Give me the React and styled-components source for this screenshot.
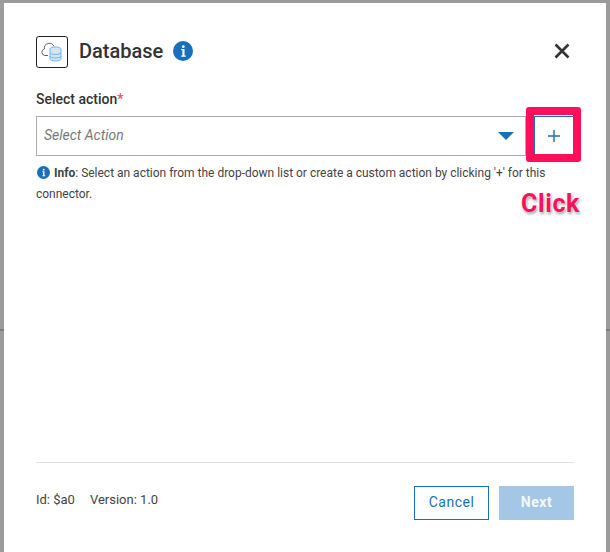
import React from "react";
import styled, { createGlobalStyle } from "styled-components";

const Global = createGlobalStyle`
  html, body {
    margin: 0;
    height: 552px;
    overflow: hidden;
    background: linear-gradient(to bottom, #9b9b9b 329px, #7f7f7f 329px, #7f7f7f 331px, #9b9b9b 331px);
    font-family: Roboto, "Liberation Sans", sans-serif;
  }
`;

const Modal = styled.div`
  box-sizing: border-box;
  position: relative;
  margin: 3px 4px 0;
  height: 549px;
  background: #fff;
  padding: 33px 32px 32px;
  display: flex;
  flex-direction: column;
  color: #333;
`;

const Header = styled.div`
  display: flex;
  align-items: center;
  height: 32px;
`;

const Logo = styled.div`
  box-sizing: border-box;
  width: 32px;
  height: 32px;
  border: 1px solid #222;
  border-radius: 3px;
  display: flex;
  align-items: center;
  justify-content: center;
`;

const Title = styled.h1`
  margin: 0 0 2px 11px;
  font-size: 20px;
  line-height: 24px;
  font-weight: 500;
  color: #333;
`;

const HelpBadge = styled.svg`
  width: 20px;
  height: 20px;
  margin: 0 0 2px 10px;
`;

const CloseButton = styled.button`
  margin: 0 0 2px auto;
  width: 24px;
  height: 24px;
  padding: 0;
  border: 0;
  background: none;
  display: flex;
  align-items: center;
  justify-content: center;
`;

const Label = styled.label`
  display: block;
  margin-top: 22px;
  font-size: 14px;
  line-height: 18px;
  font-weight: 500;
  color: #333;
`;

const Required = styled.span`
  color: #f0506e;
`;

const ActionRow = styled.div`
  display: flex;
  margin-top: 8px;
  gap: 8px;
`;

const SelectBox = styled.div`
  box-sizing: border-box;
  flex: 1;
  height: 40px;
  border: 1px solid #adadad;
  display: flex;
  align-items: center;
  padding: 0 11px 2px 7px;
  font-size: 14px;
  font-style: italic;
  color: #777;
`;

const Caret = styled.span`
  margin: 2px 0 0 auto;
  width: 0;
  height: 0;
  border-left: 8px solid transparent;
  border-right: 8px solid transparent;
  border-top: 8px solid #1a6fbb;
`;

const AddButton = styled.button`
  box-sizing: border-box;
  width: 40px;
  height: 40px;
  padding: 0;
  border: 1px solid #1a6fbb;
  background: #fff;
  display: flex;
  align-items: center;
  justify-content: center;
`;

const Highlight = styled.div`
  position: absolute;
  left: 522px;
  top: 104px;
  width: 55px;
  height: 55px;
  box-sizing: border-box;
  border: 8px solid #ff0f5b;
  border-radius: 3px;
  pointer-events: none;
`;

const Callout = styled.div`
  position: absolute;
  left: 517px;
  top: 186px;
  font-size: 25px;
  line-height: 29px;
  letter-spacing: 0.6px;
  font-weight: 700;
  color: #ff0f5b;
  text-shadow: 0 0 2px #fff, 1px 2px 3px rgba(0, 0, 0, 0.4);
`;

const InfoText = styled.p`
  margin: 7px 0 0;
  font-size: 12px;
  line-height: 21px;
  letter-spacing: -0.01px;
  color: #444;
`;

const InfoDot = styled.svg`
  width: 13px;
  height: 13px;
  margin: 0 4px 0 1px;
  vertical-align: -1.5px;
`;

const Footer = styled.div`
  margin-top: auto;
  border-top: 1px solid #e2e2e2;
  padding-top: 23px;
  display: flex;
  align-items: flex-start;
`;

const Meta = styled.span`
  font-size: 13px;
  line-height: 16px;
  margin-top: 6px;
  color: #444;
  margin-right: ${(p) => p.$gap || 0}px;
`;

const FooterButton = styled.button`
  box-sizing: border-box;
  width: 75px;
  height: 34px;
  padding: 0 0 2px;
  font-family: inherit;
  font-size: 14px;
  letter-spacing: 0.5px;
  font-weight: ${(p) => (p.$primary ? 700 : 400)};
  color: ${(p) => (p.$primary ? "#f4f8fc" : "#1a6fbb")};
  background: ${(p) => (p.$primary ? "#a3c7e4" : "#fff")};
  border: ${(p) => (p.$primary ? "0" : "1px solid #1a6fbb")};
  margin-left: ${(p) => (p.$primary ? "10px" : "auto")};
`;

const CloudDbIcon = () => (
  <svg width="26" height="26" viewBox="0 0 26 26" fill="none">
    <path
      d="M9 16.500H6a3.300 3.300 0 0 1-.6-6.500A5 5 0 0 1 15 7.500"
      stroke="#666"
      strokeWidth="1"
    />
    <ellipse cx="16.500" cy="10" rx="5.500" ry="2" fill="#cfe6fb" stroke="#6db3ee" />
    <path
      d="M11 10v10c0 1.100 2.500 2 5.500 2s5.500-.9 5.500-2V10"
      fill="#cfe6fb"
      stroke="#6db3ee"
    />
    <path
      d="M11 13.500c0 1.100 2.500 2 5.500 2s5.500-.9 5.500-2M11 17c0 1.100 2.500 2 5.500 2s5.500-.9 5.500-2"
      stroke="#6db3ee"
    />
  </svg>
);

const infoGlyph = "M8.200 8h3.300v6.500h1.300v1.300H8.200v-1.300h1.200V9.300H8.200zM10.300 4.300a1.400 1.400 0 1 1 0 2.800 1.400 1.400 0 0 1 0-2.800z";

export default function App() {
  return (
    <>
      <Global />
      <Modal>
        <Header>
          <Logo>
            <CloudDbIcon />
          </Logo>
          <Title>Database</Title>
          <HelpBadge viewBox="0 0 20 20">
            <circle cx="10" cy="10" r="10" fill="#1a6fbb" />
            <path d={infoGlyph} fill="#fff" />
          </HelpBadge>
          <CloseButton aria-label="Close">
            <svg width="16" height="16" viewBox="0 0 16 16">
              <path d="M1.500 1.500l13 13M14.500 1.500l-13 13" stroke="#333" strokeWidth="2.600" />
            </svg>
          </CloseButton>
        </Header>
        <Label>
          Select action<Required>*</Required>
        </Label>
        <ActionRow>
          <SelectBox>
            Select Action
            <Caret />
          </SelectBox>
          <AddButton aria-label="Add">
            <svg width="12" height="12" viewBox="0 0 12 12">
              <path d="M6 0v12M0 6h12" stroke="#1a6fbb" strokeWidth="1.400" />
            </svg>
          </AddButton>
        </ActionRow>
        <InfoText>
          <InfoDot viewBox="0 0 20 20">
            <circle cx="10" cy="10" r="10" fill="#1a6fbb" />
            <path d={infoGlyph} fill="#fff" />
          </InfoDot>
          <b>Info</b>: Select an action from the drop-down list or create a custom action by clicking '+' for this connector.
        </InfoText>
        <Footer>
          <Meta $gap={15}>Id: $a0</Meta>
          <Meta>Version: 1.0</Meta>
          <FooterButton>Cancel</FooterButton>
          <FooterButton $primary>Next</FooterButton>
        </Footer>
        <Highlight />
        <Callout>Click</Callout>
      </Modal>
    </>
  );
}
